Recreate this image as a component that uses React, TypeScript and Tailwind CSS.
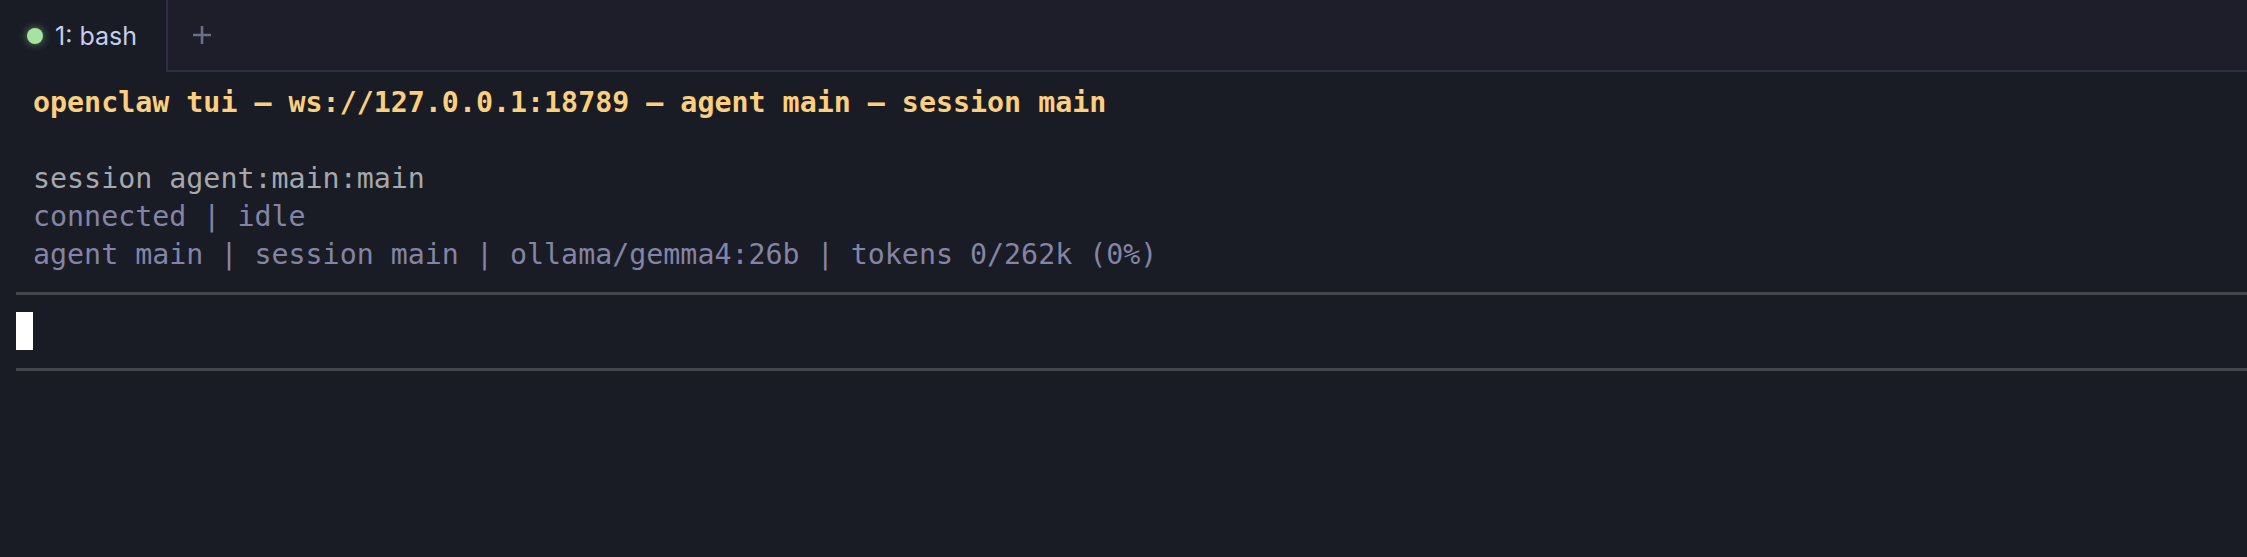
import React from "react";

const mono = "font-['DejaVu_Sans_Mono',monospace]";

function Line({ children, className = "" }: { children?: React.ReactNode; className?: string }) {
  return (
    <div className={`h-[38px] leading-[38px] whitespace-pre pl-[17px] ${className}`}>
      {children}
    </div>
  );
}

function Separator() {
  return (
    <div className="h-[38px] flex items-center">
      <div className="h-[3px] w-full bg-[#45454c]" />
    </div>
  );
}

export default function App() {
  return (
    <div className="w-[2247px] h-[557px] bg-[#191c24] flex flex-col overflow-hidden">
      {/* tab bar */}
      <div className="h-[72px] flex bg-[#1e1e2a] shrink-0">
        <div className="w-[168px] h-full bg-[#191c24] border-r-2 border-[#2f2f42] flex items-center pl-[27px] gap-[12px]">
          <span className="w-[16px] h-[16px] rounded-full bg-[#a6e3a1] shadow-[0_0_8px_rgba(166,227,161,0.55)]" />
          <span className="font-['Inter',sans-serif] text-[25px] text-[#c6cee9] leading-none">1: bash</span>
        </div>
        <div className="flex-1 flex border-b-2 border-[#2f2f42]">
          <div className="w-[68px] flex items-center justify-center">
            <svg width="20" height="20" viewBox="0 0 20 20" className="text-[#6c7086]">
              <path d="M10 1v18M1 10h18" stroke="currentColor" strokeWidth="2.6" />
            </svg>
          </div>
        </div>
      </div>

      {/* terminal */}
      <div className={`pt-[12px] pl-[16px] text-[28.3px] ${mono}`}>
        <Line className="font-bold text-[#fccf80]">
          openclaw tui – ws://127.0.0.1:18789 – agent main – session main
        </Line>
        <Line />
        <Line className="text-[#a7a7ae]">session agent:main:main</Line>
        <Line className="text-[#8484a6]">connected | idle</Line>
        <Line className="text-[#8484a6]">
          agent main | session main | ollama/gemma4:26b | tokens 0/262k (0%)
        </Line>
        <Separator />
        <div className="h-[38px] flex">
          <div className="w-[17px] h-[38px] bg-white" />
        </div>
        <Separator />
      </div>
    </div>
  );
}
